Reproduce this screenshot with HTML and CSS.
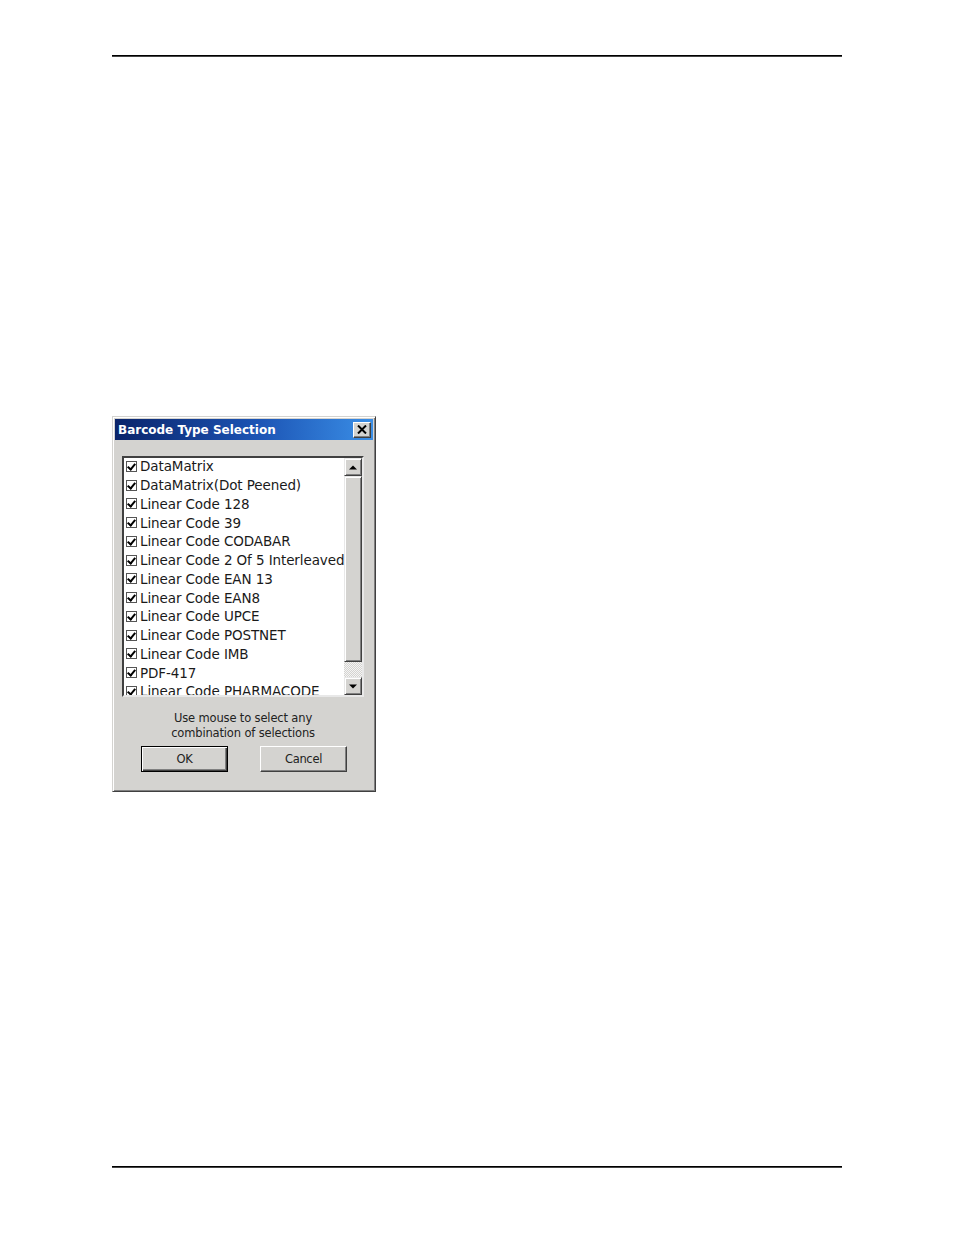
FILE: index.html
```html
<!DOCTYPE html>
<html>
<head>
<meta charset="utf-8">
<link rel="stylesheet" href="styles.css">
</head>
<body>
<div class="page">
  <div class="rule rule-top"></div>
  <div class="dialog">
    <div class="titlebar">
      <span class="title">Barcode Type Selection</span>
      <span class="close"><svg width="10" height="9" viewBox="0 0 10 9"><path d="M1 0.5 L9 8.5 M9 0.5 L1 8.5" stroke="#000" stroke-width="2" fill="none"/></svg></span>
    </div>
    <div class="body">
      <div class="listbox">
        <div class="items">
          <div class="item"><span class="cb"></span>DataMatrix</div>
          <div class="item"><span class="cb"></span>DataMatrix(Dot Peened)</div>
          <div class="item"><span class="cb"></span>Linear Code 128</div>
          <div class="item"><span class="cb"></span>Linear Code 39</div>
          <div class="item"><span class="cb"></span>Linear Code CODABAR</div>
          <div class="item"><span class="cb"></span>Linear Code 2 Of 5 Interleaved</div>
          <div class="item"><span class="cb"></span>Linear Code EAN 13</div>
          <div class="item"><span class="cb"></span>Linear Code EAN8</div>
          <div class="item"><span class="cb"></span>Linear Code UPCE</div>
          <div class="item"><span class="cb"></span>Linear Code POSTNET</div>
          <div class="item"><span class="cb"></span>Linear Code IMB</div>
          <div class="item"><span class="cb"></span>PDF-417</div>
          <div class="item"><span class="cb"></span>Linear Code PHARMACODE</div>
        </div>
        <div class="scrollbar">
          <div class="sbtn"><svg width="8" height="5" viewBox="0 0 8 5"><path d="M0 4.5 L4 0.5 L8 4.5 Z" fill="#000"/></svg></div>
          <div class="thumb"></div>
          <div class="track"></div>
          <div class="sbtn"><svg width="8" height="5" viewBox="0 0 8 5"><path d="M0 0.5 L4 4.5 L8 0.5 Z" fill="#000"/></svg></div>
        </div>
      </div>
      <div class="hint">Use mouse to select any<br>combination of selections</div>
      <div class="buttons">
        <div class="btn default"><span>OK</span></div>
        <div class="btn"><span>Cancel</span></div>
      </div>
    </div>
  </div>
  <div class="rule rule-bottom"></div>
</div>
</body>
</html>
```

FILE: styles.css
```css
html, body {
  margin: 0;
  padding: 0;
  background: #fff;
}
.page {
  width: 730px;
  margin-left: 112px;
  padding-top: 55px;
  height: 1180px;
}
.rule {
  height: 1px;
  background: #000;
  border-bottom: 0.6px solid #444;
}
.dialog {
  margin-top: 359px;
  width: 258px;
  height: 370px;
  background: #d4d3d0;
  border-top: 1px solid #d4d3d0;
  border-left: 1px solid #d4d3d0;
  border-right: 1px solid #404040;
  border-bottom: 1px solid #404040;
  box-shadow: inset 1px 1px 0 #ffffff, inset -1px -1px 0 #808080;
  padding: 2px;
  box-sizing: content-box;
  position: relative;
}
.titlebar {
  height: 21px;
  background: linear-gradient(to right, #0a246a, #1c54b4 55%, #3a8ee6);
  display: flex;
  align-items: center;
  justify-content: space-between;
  padding: 0 2px 0 3px;
}
.title {
  font-family: "DejaVu Sans", sans-serif;
  font-weight: bold;
  font-size: 12px;
  color: #fff;
  letter-spacing: 0px;
  padding-top: 1px;
}
.close {
  width: 18px;
  height: 16px;
  background: #d4d3d0;
  box-sizing: border-box;
  border-top: 1px solid #fff;
  border-left: 1px solid #fff;
  border-right: 1px solid #404040;
  border-bottom: 1px solid #404040;
  box-shadow: inset -1px -1px 0 #808080;
  display: flex;
  align-items: center;
  justify-content: center;
}
.body {
  padding: 16px 9px 0 7px;
}
.listbox {
  width: 238px;
  height: 237px;
  background: #fff;
  border-top: 2px solid #404040;
  border-left: 2px solid #404040;
  border-right: 2px solid #e8e8e8;
  border-bottom: 2px solid #e8e8e8;
  display: flex;
  overflow: hidden;
}
.items {
  flex: 1;
  overflow: hidden;
  padding-left: 2px;
  margin-top: -1px;
}
.item {
  height: 18.75px;
  display: flex;
  align-items: center;
  white-space: nowrap;
  font-family: "DejaVu Sans", sans-serif;
  font-size: 13.5px;
  letter-spacing: -0.1px;
  color: #1a1a1a;
}
.cb {
  width: 11px;
  height: 11px;
  border: 1px solid #555;
  box-sizing: border-box;
  margin-right: 3px;
  flex: none;
  position: relative;
  background: #fff;
}
.cb::after {
  content: "";
  position: absolute;
  left: 2px;
  top: 0px;
  width: 3px;
  height: 6px;
  border-right: 2px solid #000;
  border-bottom: 2px solid #000;
  transform: rotate(40deg);
}
.scrollbar {
  width: 18px;
  flex: none;
  display: flex;
  flex-direction: column;
  background: #d4d3d0;
}
.sbtn, .thumb {
  box-sizing: border-box;
  background: #d4d3d0;
  border-top: 1px solid #e8e8e8;
  border-left: 1px solid #e8e8e8;
  border-right: 1px solid #404040;
  border-bottom: 1px solid #404040;
  box-shadow: inset 1px 1px 0 #fff, inset -1px -1px 0 #808080;
}
.sbtn {
  height: 18px;
  display: flex;
  align-items: center;
  justify-content: center;
}
.thumb {
  height: 186px;
}
.track {
  flex: 1;
  background-color: #eaeaea;
  background-image: repeating-conic-gradient(#d4d3d0 0% 25%, #f4f4f4 0% 50%);
  background-size: 2px 2px;
}
.hint {
  margin-top: 14px;
  text-align: center;
  font-family: "DejaVu Sans", sans-serif;
  font-size: 11.5px;
  letter-spacing: -0.15px;
  line-height: 15px;
  color: #222;
  padding-left: 0px;
}
.buttons {
  display: flex;
  justify-content: center;
  gap: 32px;
  margin-top: 5px;
  padding-left: 2px;
}
.btn {
  width: 87px;
  height: 26px;
  box-sizing: border-box;
  background: #d4d3d0;
  border-top: 1px solid #fff;
  border-left: 1px solid #fff;
  border-right: 1px solid #404040;
  border-bottom: 1px solid #404040;
  box-shadow: inset -1px -1px 0 #808080;
  display: flex;
  align-items: center;
  justify-content: center;
  font-family: "DejaVu Sans", sans-serif;
  font-size: 11.5px;
  letter-spacing: -0.3px;
  color: #222;
}
.btn.default {
  border: 1px solid #000;
  box-shadow: inset 1px 1px 0 #fff, inset -1px -1px 0 #404040, inset -2px -2px 0 #808080;
}
.rule-bottom {
  margin-top: 374px;
}
```
